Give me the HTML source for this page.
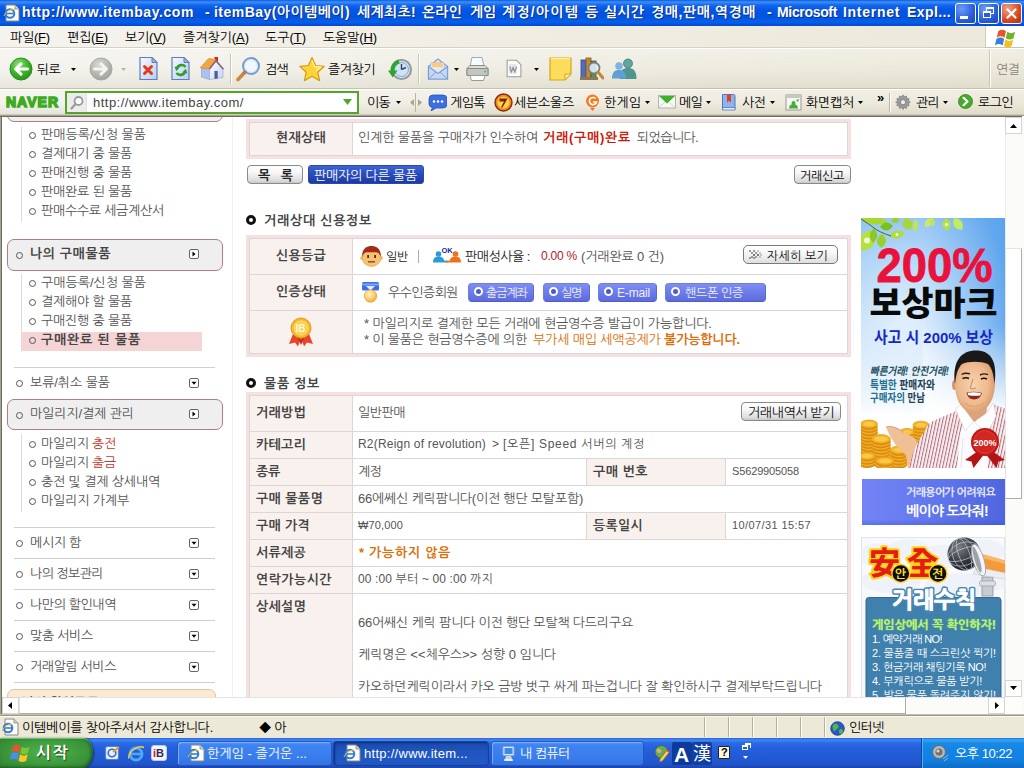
<!DOCTYPE html>
<html lang="ko">
<head>
<meta charset="utf-8">
<title>itemBay</title>
<style>
*{box-sizing:border-box;margin:0;padding:0}
html,body{width:1024px;height:768px;overflow:hidden;background:#ece9d8}
body{font-family:"Liberation Sans","NanumGothic","Noto Sans CJK KR",sans-serif;font-size:13px;color:#000;position:relative}
.a{position:absolute;display:block}
.t{position:absolute;white-space:nowrap;line-height:1}
u{text-decoration:underline;text-underline-offset:1px}
.ring{position:absolute;border-radius:50%;border:1.5px solid #555;width:7px;height:7px}
/* chrome */
.wb{top:3px;width:21px;height:21px;border:1px solid #fff;border-radius:3px;background:radial-gradient(circle at 30% 25%,#6d9bf8,#2a5ddb 60%,#1a44bb)}
.wb.c{background:radial-gradient(circle at 30% 25%,#f0a088,#d8481f 60%,#b02c0c)}
</style>
</head>
<body>
<!-- p_page_side -->
<div class="a" style="left:2px;top:117px;width:1003px;height:581px;background:#fff"></div>
<div class="a" style="left:232px;top:117px;width:1px;height:581px;background:#f1f1f1"></div>
<div class="a" style="border:1px solid #b47c84;border-radius:7px;background:#efefef;left:7px;top:90px;width:216px;height:32px;"></div>
<div class="a" style="left:21px;top:127px;width:1px;height:95px;background:#dcdcdc"></div>
<div class="ring" style="left:29.0px;top:132.0px;border-color:#555"></div>
<div class="t" style="left:41px;top:128px;color:#555;letter-spacing:0.00px;">판매등록/신청 물품</div>
<div class="ring" style="left:29.0px;top:151.0px;border-color:#555"></div>
<div class="t" style="left:41px;top:147px;color:#555;letter-spacing:-0.20px;">결제대기 중 물품</div>
<div class="ring" style="left:29.0px;top:170.0px;border-color:#555"></div>
<div class="t" style="left:41px;top:166px;color:#555;letter-spacing:-0.20px;">판매진행 중 물품</div>
<div class="ring" style="left:29.0px;top:189.0px;border-color:#555"></div>
<div class="t" style="left:41px;top:185px;color:#555;letter-spacing:-0.20px;">판매완료 된 물품</div>
<div class="ring" style="left:29.0px;top:208.0px;border-color:#555"></div>
<div class="t" style="left:41px;top:204px;color:#555;letter-spacing:-0.26px;">판매수수료 세금계산서</div>
<div class="a" style="left:7px;top:239px;width:216px;height:32px;border:1px solid #b47c84;border-radius:7px;background:#efefef"></div>
<div class="ring" style="left:16.0px;top:252.0px;border-color:#555"></div>
<div class="t" style="left:30px;top:247px;color:#444;font-weight:bold;letter-spacing:0.58px;">나의 구매물품</div>
<svg class="a" style="left:189px;top:249px;" width="10" height="10" viewBox="0 0 10 10"><rect x=".5" y=".5" width="9" height="9" rx="1.500" fill="#fff" stroke="#666" stroke-width="1"/><path d="M3.500 2.500v5l3-2.500z" fill="#000"/></svg>
<div class="a" style="left:21px;top:274px;width:1px;height:78px;background:#dcdcdc"></div>
<div class="a" style="left:21px;top:332px;width:181px;height:19px;background:#f4d4d4"></div>
<div class="ring" style="left:29.0px;top:280.0px;border-color:#555"></div>
<div class="t" style="left:41px;top:276px;color:#555;letter-spacing:0.00px;">구매등록/신청 물품</div>
<div class="ring" style="left:29.0px;top:299.0px;border-color:#555"></div>
<div class="t" style="left:41px;top:295px;color:#555;letter-spacing:-0.20px;">결제해야 할 물품</div>
<div class="ring" style="left:29.0px;top:318.0px;border-color:#555"></div>
<div class="t" style="left:41px;top:314px;color:#555;letter-spacing:-0.20px;">구매진행 중 물품</div>
<div class="ring" style="left:29.0px;top:337.0px;border-color:#555"></div>
<div class="t" style="left:41px;top:333px;color:#444;font-weight:bold;letter-spacing:0.80px;">구매완료 된 물품</div>
<div class="a" style="left:14px;top:367px;width:201px;height:1px;background:#cfcfcf"></div>
<div class="ring" style="left:16.0px;top:380.0px;border-color:#555"></div>
<div class="t" style="left:30px;top:376px;color:#555;letter-spacing:-0.07px;">보류/취소 물품</div>
<svg class="a" style="left:189px;top:378px;" width="10" height="10" viewBox="0 0 10 10"><rect x=".5" y=".5" width="9" height="9" rx="1.500" fill="#fff" stroke="#666" stroke-width="1"/><path d="M2.500 3.800h5L5 6.800z" fill="#000"/></svg>
<div class="a" style="left:7px;top:399px;width:216px;height:31px;border:1px solid #b47c84;border-radius:7px;background:#efefef"></div>
<div class="ring" style="left:16.0px;top:411.5px;border-color:#555"></div>
<div class="t" style="left:30px;top:407px;color:#555;letter-spacing:-0.10px;">마일리지/결제 관리</div>
<svg class="a" style="left:189px;top:409px;" width="10" height="10" viewBox="0 0 10 10"><rect x=".5" y=".5" width="9" height="9" rx="1.500" fill="#fff" stroke="#666" stroke-width="1"/><path d="M3.500 2.500v5l3-2.500z" fill="#000"/></svg>
<div class="a" style="left:21px;top:434px;width:1px;height:78px;background:#dcdcdc"></div>
<div class="ring" style="left:29.0px;top:441.0px;border-color:#555"></div>
<div class="t" style="left:41px;top:437px;color:#555;letter-spacing:-0.28px;">마일리지 <span style="color:#c0392b">충전</span></div>
<div class="ring" style="left:29.0px;top:460.0px;border-color:#555"></div>
<div class="t" style="left:41px;top:456px;color:#555;letter-spacing:-0.28px;">마일리지 <span style="color:#c0392b">출금</span></div>
<div class="ring" style="left:29.0px;top:479.0px;border-color:#555"></div>
<div class="t" style="left:41px;top:475px;color:#555;letter-spacing:-0.15px;">충전 및 결제 상세내역</div>
<div class="ring" style="left:29.0px;top:498.0px;border-color:#555"></div>
<div class="t" style="left:41px;top:494px;color:#555;letter-spacing:-0.14px;">마일리지 가계부</div>
<div class="a" style="left:14px;top:527px;width:201px;height:1px;background:#cfcfcf"></div>
<div class="ring" style="left:16.0px;top:540.0px;border-color:#555"></div>
<div class="t" style="left:30px;top:536px;color:#555;letter-spacing:-0.30px;">메시지 함</div>
<svg class="a" style="left:189px;top:538px;" width="10" height="10" viewBox="0 0 10 10"><rect x=".5" y=".5" width="9" height="9" rx="1.500" fill="#fff" stroke="#666" stroke-width="1"/><path d="M2.500 3.800h5L5 6.800z" fill="#000"/></svg>
<div class="a" style="left:14px;top:558px;width:201px;height:1px;background:#cfcfcf"></div>
<div class="ring" style="left:16.0px;top:571.0px;border-color:#555"></div>
<div class="t" style="left:30px;top:567px;color:#555;letter-spacing:-0.56px;">나의 정보관리</div>
<svg class="a" style="left:189px;top:569px;" width="10" height="10" viewBox="0 0 10 10"><rect x=".5" y=".5" width="9" height="9" rx="1.500" fill="#fff" stroke="#666" stroke-width="1"/><path d="M2.500 3.800h5L5 6.800z" fill="#000"/></svg>
<div class="a" style="left:14px;top:589px;width:201px;height:1px;background:#cfcfcf"></div>
<div class="ring" style="left:16.0px;top:602.0px;border-color:#555"></div>
<div class="t" style="left:30px;top:598px;color:#555;letter-spacing:-0.39px;">나만의 할인내역</div>
<svg class="a" style="left:189px;top:600px;" width="10" height="10" viewBox="0 0 10 10"><rect x=".5" y=".5" width="9" height="9" rx="1.500" fill="#fff" stroke="#666" stroke-width="1"/><path d="M2.500 3.800h5L5 6.800z" fill="#000"/></svg>
<div class="a" style="left:14px;top:620px;width:201px;height:1px;background:#cfcfcf"></div>
<div class="ring" style="left:16.0px;top:633.0px;border-color:#555"></div>
<div class="t" style="left:30px;top:629px;color:#555;letter-spacing:-0.29px;">맞춤 서비스</div>
<svg class="a" style="left:189px;top:631px;" width="10" height="10" viewBox="0 0 10 10"><rect x=".5" y=".5" width="9" height="9" rx="1.500" fill="#fff" stroke="#666" stroke-width="1"/><path d="M2.500 3.800h5L5 6.800z" fill="#000"/></svg>
<div class="a" style="left:14px;top:651px;width:201px;height:1px;background:#cfcfcf"></div>
<div class="ring" style="left:16.0px;top:664.0px;border-color:#555"></div>
<div class="t" style="left:30px;top:660px;color:#555;letter-spacing:-0.39px;">거래알림 서비스</div>
<svg class="a" style="left:189px;top:662px;" width="10" height="10" viewBox="0 0 10 10"><rect x=".5" y=".5" width="9" height="9" rx="1.500" fill="#fff" stroke="#666" stroke-width="1"/><path d="M2.500 3.800h5L5 6.800z" fill="#000"/></svg>
<div class="a" style="left:14px;top:682px;width:201px;height:1px;background:#cfcfcf"></div>
<div class="a" style="left:7px;top:689px;width:209px;height:30px;border:1px solid #dcc6a4;border-radius:7px;background:#fbe9d2"></div>
<div class="t" style="left:22px;top:696px;color:#6a5a48;font-weight:bold;">나의 할인쿠폰</div>
<!-- p_page_main -->
<div class="a" style="left:246px;top:119px;width:605px;height:40px;background:#f6e0e2"></div>
<div class="a" style="left:249px;top:122px;width:599px;height:34px;background:#fff;border:1px solid #dcd6d6"></div>
<div class="a" style="left:250px;top:123px;width:102px;height:32px;background:#f9f1ee"></div>
<div class="a" style="left:352px;top:123px;width:1px;height:32px;background:#dcd6d6"></div>
<div class="t" style="left:276px;top:131px;color:#444;font-weight:bold;letter-spacing:0.28px;">현재상태</div>
<div class="t" style="left:358px;top:131px;color:#555;letter-spacing:-0.11px;">인계한 물품을 구매자가 인수하여</div>
<div class="t" style="left:543px;top:131px;color:#cc1a0a;font-weight:bold;letter-spacing:0.75px;">거래(구매)완료</div>
<div class="t" style="left:637px;top:131px;color:#555;letter-spacing:-0.62px;">되었습니다.</div>
<div class="a" style="left:247px;top:165px;width:56px;height:19px;border:1px solid #8a8a8a;border-radius:4px;background:linear-gradient(#ffffff 0,#f6f6f6 40%,#dcdcdc 85%,#c8c8c8 100%)"></div>
<div class="t" style="left:258px;top:169px;color:#222;font-weight:bold;letter-spacing:-0.06px;">목&nbsp;&nbsp;&nbsp;록</div>
<div class="a" style="left:308px;top:165px;width:116px;height:19px;border-radius:3px;background:linear-gradient(#3d64d4 0,#2a4cbc 45%,#1d3aa0 100%);border:1px solid #2a48b0"></div>
<div class="t" style="left:314px;top:169px;color:#fff;letter-spacing:-0.20px;">판매자의 다른 물품</div>
<div class="a" style="left:794px;top:165px;width:57px;height:19px;border:1px solid #8a8a8a;border-radius:4px;background:linear-gradient(#ffffff 0,#f6f6f6 40%,#dcdcdc 85%,#c8c8c8 100%)"></div>
<div class="t" style="left:800px;top:170px;font-size:12px;letter-spacing:-0.28px;">거래신고</div>
<div class="a" style="left:246px;top:215px;width:10px;height:10px;border-radius:50%;border:3px solid #111;background:#fff"></div>
<div class="t" style="left:264px;top:214px;color:#444;font-weight:bold;letter-spacing:0.74px;">거래상대 신용정보</div>
<div class="a" style="left:246px;top:235px;width:605px;height:122px;background:#f6e0e2"></div>
<div class="a" style="left:249px;top:238px;width:599px;height:116px;background:#fff;border:1px solid #dcd6d6"></div>
<div class="a" style="left:250px;top:239px;width:102px;height:114px;background:#f9f1ee"></div>
<div class="a" style="left:352px;top:239px;width:1px;height:114px;background:#dcd6d6"></div>
<div class="a" style="left:250px;top:274px;width:597px;height:1px;background:#dcd6d6"></div>
<div class="a" style="left:250px;top:310px;width:597px;height:1px;background:#dcd6d6"></div>
<div class="t" style="left:276px;top:249px;color:#444;font-weight:bold;letter-spacing:0.28px;">신용등급</div>
<div class="t" style="left:276px;top:285px;color:#444;font-weight:bold;letter-spacing:0.28px;">인증상태</div>
<svg class="a" style="left:360px;top:245px;" width="23" height="22" viewBox="0 0 23 22"><circle cx="2" cy="13" r="1.800" fill="#eeb060"/><circle cx="21" cy="13" r="1.800" fill="#eeb060"/><ellipse cx="11.500" cy="12.500" rx="9.500" ry="9" fill="#f6c170" stroke="#e0a04a" stroke-width=".6"/><path d="M2.300 12C1.500 3.500 7 1 11.500 1S21.500 3.500 20.700 12C19.500 8.500 18 7.200 16 7.200H7C5 7.200 3.500 8.500 2.300 12z" fill="#a42a1a"/><rect x="7.300" y="10" width="1.600" height="3" fill="#3a2416"/><rect x="14.300" y="10" width="1.600" height="3" fill="#3a2416"/><path d="M8 16.800h7" stroke="#8a3a1a" stroke-width="1.300"/></svg>
<div class="t" style="left:386px;top:251px;font-size:12px;color:#222;letter-spacing:-0.28px;">일반</div>
<div class="a" style="left:418px;top:250px;width:1px;height:13px;background:#aaa"></div>
<svg class="a" style="left:433px;top:246px;" width="28" height="17" viewBox="0 0 28 17"><circle cx="5.500" cy="8" r="2.800" fill="#2a9ad8"/><path d="M0 16.500c0-4 2-6 5.500-6s5.500 2 5.500 4l4 .3v1.700z" fill="#2a9ad8"/><circle cx="22.500" cy="8" r="2.800" fill="#f2701a"/><path d="M28 16.500c0-4-2-6-5.500-6s-5.500 2-5.500 4l-4 .3v1.700z" fill="#f2701a"/><text x="8.500" y="6.500" font-size="7.500" font-weight="bold" font-family="Liberation Sans,sans-serif" fill="#1a2a9a">OK</text></svg>
<div class="t" style="left:465px;top:250px;color:#222;letter-spacing:-0.48px;">판매성사율 :</div>
<div class="t" style="left:541px;top:250px;font-size:12px;color:#b0202a;letter-spacing:-0.23px;">0.00 %</div>
<div class="t" style="left:581px;top:250px;color:#555;letter-spacing:-0.12px;">(거래완료 0 건)</div>
<div class="a" style="left:743px;top:245px;width:95px;height:19px;border:1px solid #7a7a7a;border-radius:5px;background:linear-gradient(#ffffff 0,#f4f4f4 50%,#dedede 100%)"></div>
<svg class="a" style="left:749px;top:250px;" width="13" height="9" viewBox="0 0 13 9"><g fill="#9a9a9a"><rect x="0" y="0" width="2" height="2"/><rect x="2" y="2" width="2" height="2"/><rect x="4" y="4" width="2" height="2" fill="#777"/><rect x="2" y="6" width="2" height="2"/><rect x="0" y="7" width="2" height="2"/><rect x="4" y="0" width="2" height="2"/><rect x="6" y="2" width="2" height="2"/><rect x="8" y="4" width="2" height="2" fill="#777"/><rect x="6" y="6" width="2" height="2"/><rect x="4" y="7" width="2" height="2"/><rect x="8" y="0" width="2" height="2" opacity=".5"/><rect x="10" y="2" width="2" height="2" opacity=".5"/><rect x="11" y="4" width="2" height="2" opacity=".5"/><rect x="10" y="6" width="2" height="2" opacity=".5"/></g></svg>
<div class="t" style="left:767px;top:250px;font-size:12px;color:#111;letter-spacing:0.21px;">자세히 보기</div>
<svg class="a" style="left:361px;top:281px;" width="19" height="22" viewBox="0 0 19 22"><defs><radialGradient id="mdl" cx=".4" cy=".35" r=".7"><stop offset="0" stop-color="#fff4cc"/><stop offset=".6" stop-color="#f8cc68"/><stop offset="1" stop-color="#e8a838"/></radialGradient></defs><rect x="1" y="1" width="17" height="8.500" rx="1.500" fill="#3c6ee4"/><path d="M1 2.500h17v2H1z" fill="#7aa4f8"/><path d="M5 5l4.500 4.500L14 5" fill="#fff" opacity=".85"/><circle cx="9.500" cy="15" r="6.300" fill="url(#mdl)" stroke="#e0a030" stroke-width=".6"/></svg>
<div class="t" style="left:388px;top:286px;color:#555;letter-spacing:-0.55px;">우수인증회원</div>
<div class="a" style="left:468px;top:283px;width:66px;height:19px;border-radius:4px;background:linear-gradient(#7f8ef2 0,#6c7ce8 50%,#5d6bdc 100%);border:1px solid #6f7de0;border-bottom-color:#4f5cc4;border-right-color:#5a68d0"></div>
<div class="a" style="left:474px;top:287px;width:9px;height:9px;border-radius:50%;border:2px solid #fff;background:#4a5ad0"></div>
<div class="t" style="left:486px;top:287px;font-size:12px;color:#eef0ff;letter-spacing:-1.03px;">출금계좌</div>
<div class="a" style="left:543px;top:283px;width:47px;height:19px;border-radius:4px;background:linear-gradient(#7f8ef2 0,#6c7ce8 50%,#5d6bdc 100%);border:1px solid #6f7de0;border-bottom-color:#4f5cc4;border-right-color:#5a68d0"></div>
<div class="a" style="left:549px;top:287px;width:9px;height:9px;border-radius:50%;border:2px solid #fff;background:#4a5ad0"></div>
<div class="t" style="left:561px;top:287px;font-size:12px;color:#eef0ff;letter-spacing:-1.28px;">실명</div>
<div class="a" style="left:598px;top:283px;width:59px;height:19px;border-radius:4px;background:linear-gradient(#7f8ef2 0,#6c7ce8 50%,#5d6bdc 100%);border:1px solid #6f7de0;border-bottom-color:#4f5cc4;border-right-color:#5a68d0"></div>
<div class="a" style="left:604px;top:287px;width:9px;height:9px;border-radius:50%;border:2px solid #fff;background:#4a5ad0"></div>
<div class="t" style="left:617px;top:287px;font-size:12px;color:#eef0ff;letter-spacing:-0.17px;">E-mail</div>
<div class="a" style="left:665px;top:283px;width:101px;height:19px;border-radius:4px;background:linear-gradient(#7f8ef2 0,#6c7ce8 50%,#5d6bdc 100%);border:1px solid #6f7de0;border-bottom-color:#4f5cc4;border-right-color:#5a68d0"></div>
<div class="a" style="left:671px;top:287px;width:9px;height:9px;border-radius:50%;border:2px solid #fff;background:#4a5ad0"></div>
<div class="t" style="left:685px;top:287px;font-size:12px;color:#eef0ff;letter-spacing:-0.29px;">핸드폰 인증</div>
<svg class="a" style="left:288px;top:317px;" width="26" height="30" viewBox="0 0 26 30"><path d="M5 17L1 27l6-1.500 3 4 3-9z" fill="#e8442a"/><path d="M21 17l4 10-6-1.500-3 4-3-9z" fill="#e8442a"/><path d="M9 20l4 2 4-2-4 8z" fill="#c8301a"/><circle cx="13" cy="11" r="10" fill="#f7b82a" stroke="#e09a1a" stroke-width="1"/><circle cx="13" cy="11" r="7" fill="#fbd04a" stroke="#f7e08a" stroke-width="1"/><text x="7.500" y="15" font-size="10" font-weight="bold" font-family="Liberation Sans,sans-serif" fill="#fff8d8">IB</text></svg>
<div class="t" style="left:364px;top:317px;color:#555;letter-spacing:-0.11px;">* 마일리지로 결제한 모든 거래에 현금영수증 발급이 가능합니다.</div>
<div class="t" style="left:364px;top:333px;color:#555;letter-spacing:-0.19px;">* 이 물품은 현금영수증에 의한</div>
<div class="t" style="left:533px;top:333px;color:#d9700a;letter-spacing:-0.15px;">부가세 매입 세액공제가 <b>불가능합니다.</b></div>
<div class="a" style="left:246px;top:378px;width:10px;height:10px;border-radius:50%;border:3px solid #111;background:#fff"></div>
<div class="t" style="left:264px;top:377px;color:#444;font-weight:bold;letter-spacing:0.70px;">물품 정보</div>
<div class="a" style="left:246px;top:392px;width:605px;height:330px;background:#f6e0e2"></div>
<div class="a" style="left:249px;top:395px;width:599px;height:324px;background:#fff;border:1px solid #dcd6d6"></div>
<div class="a" style="left:250px;top:396px;width:102px;height:322px;background:#f9f1ee"></div>
<div class="a" style="left:352px;top:396px;width:1px;height:322px;background:#dcd6d6"></div>
<div class="a" style="left:250px;top:431px;width:597px;height:1px;background:#dcd6d6"></div>
<div class="a" style="left:250px;top:458px;width:597px;height:1px;background:#dcd6d6"></div>
<div class="a" style="left:250px;top:485px;width:597px;height:1px;background:#dcd6d6"></div>
<div class="a" style="left:250px;top:512px;width:597px;height:1px;background:#dcd6d6"></div>
<div class="a" style="left:250px;top:539px;width:597px;height:1px;background:#dcd6d6"></div>
<div class="a" style="left:250px;top:566px;width:597px;height:1px;background:#dcd6d6"></div>
<div class="a" style="left:250px;top:593px;width:597px;height:1px;background:#dcd6d6"></div>
<div class="a" style="left:587px;top:459px;width:138px;height:26px;background:#f9f1ee"></div>
<div class="a" style="left:586px;top:459px;width:1px;height:26px;background:#dcd6d6"></div>
<div class="a" style="left:725px;top:459px;width:1px;height:26px;background:#dcd6d6"></div>
<div class="a" style="left:587px;top:513px;width:138px;height:26px;background:#f9f1ee"></div>
<div class="a" style="left:586px;top:513px;width:1px;height:26px;background:#dcd6d6"></div>
<div class="a" style="left:725px;top:513px;width:1px;height:26px;background:#dcd6d6"></div>
<div class="t" style="left:256px;top:406px;color:#444;font-weight:bold;letter-spacing:0.28px;">거래방법</div>
<div class="t" style="left:256px;top:438px;color:#444;font-weight:bold;letter-spacing:0.28px;">카테고리</div>
<div class="t" style="left:256px;top:465px;color:#444;font-weight:bold;letter-spacing:-0.23px;">종류</div>
<div class="t" style="left:256px;top:492px;color:#444;font-weight:bold;letter-spacing:0.38px;">구매 물품명</div>
<div class="t" style="left:256px;top:519px;color:#444;font-weight:bold;letter-spacing:0.30px;">구매 가격</div>
<div class="t" style="left:256px;top:546px;color:#444;font-weight:bold;letter-spacing:0.28px;">서류제공</div>
<div class="t" style="left:256px;top:573px;color:#444;font-weight:bold;letter-spacing:0.45px;">연락가능시간</div>
<div class="t" style="left:256px;top:600px;color:#444;font-weight:bold;letter-spacing:0.28px;">상세설명</div>
<div class="t" style="left:358px;top:406px;color:#555;letter-spacing:-0.47px;">일반판매</div>
<div class="a" style="left:741px;top:402px;width:100px;height:19px;border:1px solid #8a8a8a;border-radius:4px;background:linear-gradient(#ffffff 0,#f6f6f6 40%,#dcdcdc 85%,#c8c8c8 100%)"></div>
<div class="t" style="left:748px;top:406px;color:#111;letter-spacing:-0.39px;">거래내역서 받기</div>
<div class="t" style="left:358px;top:438px;font-size:12px;color:#555;letter-spacing:0.20px;">R2(Reign of revolution)</div>
<div class="t" style="left:492px;top:438px;font-size:12px;color:#555;">&gt;</div>
<div class="t" style="left:503px;top:438px;font-size:12px;color:#555;letter-spacing:0.69px;">[오픈] Speed 서버의 계정</div>
<div class="t" style="left:358px;top:465px;color:#555;letter-spacing:-0.73px;">계정</div>
<div class="t" style="left:593px;top:465px;color:#444;font-weight:bold;letter-spacing:0.50px;">구매 번호</div>
<div class="t" style="left:732px;top:466px;font-size:11px;color:#555;letter-spacing:-0.14px;">S5629905058</div>
<div class="t" style="left:358px;top:492px;color:#555;letter-spacing:-0.19px;">66에쎄신 케릭팜니다(이전 행단 모탈포함)</div>
<div class="t" style="left:358px;top:520px;font-size:11px;color:#555;letter-spacing:0.14px;">₩70,000</div>
<div class="t" style="left:593px;top:519px;color:#444;font-weight:bold;letter-spacing:0.28px;">등록일시</div>
<div class="t" style="left:732px;top:520px;font-size:11px;color:#555;letter-spacing:0.40px;">10/07/31 15:57</div>
<div class="t" style="left:359px;top:546px;color:#d9700a;font-weight:bold;letter-spacing:0.71px;">* 가능하지 않음</div>
<div class="t" style="left:358px;top:573px;font-size:12px;color:#555;letter-spacing:0.13px;">00 :00 부터 ~ 00 :00 까지</div>
<div class="t" style="left:358px;top:616px;color:#555;letter-spacing:-0.20px;">66어쌔신 케릭 팜니다 이전 행단 모탈책 다드리구요</div>
<div class="t" style="left:358px;top:648px;color:#555;letter-spacing:-0.03px;">케릭명은 &lt;&lt;체우스&gt;&gt; 성향 0 임니다</div>
<div class="t" style="left:358px;top:680px;color:#555;letter-spacing:-0.11px;">카오하던케릭이라서 카오 금방 벗구 싸게 파는겁니다 잘 확인하시구 결제부탁드립니다</div>
<!-- p_page_ban -->
<svg class="a" style="left:861px;top:218px;" width="144" height="250" viewBox="0 0 144 250"><defs><linearGradient id="sky" x1="0" y1="0" x2="0" y2="1"><stop offset="0" stop-color="#86bdf2"/><stop offset=".3" stop-color="#a9d3f7"/><stop offset=".55" stop-color="#cfe5fa"/><stop offset=".74" stop-color="#eef6fd"/><stop offset=".79" stop-color="#ffffff"/><stop offset="1" stop-color="#ffffff"/></linearGradient><radialGradient id="glow" cx=".3" cy=".5" r=".75"><stop offset="0" stop-color="#fff" stop-opacity=".55"/><stop offset=".55" stop-color="#fff" stop-opacity=".2"/><stop offset="1" stop-color="#fff" stop-opacity="0"/></radialGradient><linearGradient id="rgt" x1="0" y1="0" x2="1" y2="0"><stop offset="0" stop-color="#4f9cec" stop-opacity="0"/><stop offset="1" stop-color="#4f9cec" stop-opacity=".8"/></linearGradient><linearGradient id="rfade" x1="0" y1="0" x2="0" y2="1"><stop offset="0" stop-color="#fff" stop-opacity="0"/><stop offset=".55" stop-color="#fff" stop-opacity="0"/><stop offset="1" stop-color="#fff" stop-opacity="1"/></linearGradient><radialGradient id="face" cx=".45" cy=".5" r=".62"><stop offset="0" stop-color="#f8d2ac"/><stop offset=".6" stop-color="#eeb98e"/><stop offset="1" stop-color="#cf9062"/></radialGradient><pattern id="strp" width="3.2" height="6" patternUnits="userSpaceOnUse" patternTransform="rotate(12)"><rect width="3.2" height="6" fill="#f6eff1"/><rect width="1" height="6" fill="#b86a78"/></pattern></defs><rect width="144" height="250" fill="url(#sky)"/><g><rect x="62" width="82" height="196" fill="url(#rgt)"/><rect x="62" width="82" height="196" fill="url(#rfade)"/></g><rect width="144" height="200" fill="url(#glow)"/><path d="M0.0 1.0Q12.6 10.4 27.0 4.0Q14.4 -5.4 0.0 1.0z" fill="#a8d830"/><path d="M19.0 9.0Q26.1 16.4 32.0 8.0Q24.9 0.6 19.0 9.0z" fill="#7cc01c"/><path d="M11.0 12.0Q-8.6 15.6 1.0 33.0Q20.6 29.4 11.0 12.0z" fill="#b4e040"/><circle cx="6.0" cy="22.5" r="3.0" fill="#fff" opacity=".8"/><path d="M13.0 10.0Q5.1 17.0 12.0 25.0Q19.9 18.0 13.0 10.0z" fill="#8cc824"/><path d="M21.0 16.0Q11.6 22.4 20.0 30.0Q29.4 23.6 21.0 16.0z" fill="#98d02a"/><path d="M28.0 18.0Q37.5 24.3 44.0 15.0Q34.5 8.7 28.0 18.0z" fill="#b0dc3c"/><circle cx="36.0" cy="16.5" r="1.5" fill="#fff" opacity=".8"/><path d="M30.0 3.0Q35.1 7.9 39.0 2.0Q33.9 -2.9 30.0 3.0z" fill="#9cd02c"/><path d="M44.0 0.0Q37.3 9.8 49.0 12.0Q55.7 2.2 44.0 0.0z" fill="#a4d834"/><path d="M55.0 1.0Q49.1 7.1 54.0 14.0Q59.9 7.9 55.0 1.0z" fill="#c0e458"/><path d="M72.0 0.0Q62.4 -0.4 64.0 9.0Q73.6 9.4 72.0 0.0z" fill="#c8ea68"/><path d="M70.0 0.0Q66.9 5.7 73.0 8.0Q76.1 2.3 70.0 0.0z" fill="#c0e458"/><path d="M85.0 0.0Q77.1 7.1 86.0 13.0Q93.9 5.9 85.0 0.0z" fill="#b4e048"/><circle cx="85.5" cy="6.5" r="1.6" fill="#fff" opacity=".8"/><path d="M93.0 0.0Q89.6 11.0 101.0 12.0Q104.4 1.0 93.0 0.0z" fill="#c4ea64"/><path d="M0 1Q8 6 13 10T30 18" fill="none" stroke="#355c18" stroke-width=".9"/><text x="15.500" y="64" font-family="Liberation Sans,sans-serif" font-weight="bold" font-size="49" fill="#e8123c" stroke="#e8123c" stroke-width=".8" textLength="116" lengthAdjust="spacingAndGlyphs">200%</text><text x="8.500" y="97" font-family="Noto Sans CJK KR,NanumGothic,sans-serif" font-weight="900" font-size="33" fill="#0a0a0a" textLength="128" lengthAdjust="spacingAndGlyphs">보상마크</text><text x="13" y="125" font-family="Liberation Sans,Noto Sans CJK KR,sans-serif" font-weight="bold" font-size="15.500" fill="#1428c4" textLength="119" lengthAdjust="spacingAndGlyphs">사고 시 200% 보상</text><g font-family="Liberation Sans,Noto Sans CJK KR,sans-serif" font-weight="bold" font-size="11"><text x="9" y="157" fill="#24505e" textLength="79" lengthAdjust="spacingAndGlyphs" font-style="italic">빠른거래! 안전거래!</text><text x="9" y="170.500" fill="#1f6f8f" textLength="65" lengthAdjust="spacingAndGlyphs">특별한 <tspan fill="#24404e">판매자와</tspan></text><text x="9" y="183.500" fill="#1f6f8f" textLength="55" lengthAdjust="spacingAndGlyphs">구매자의 <tspan fill="#24404e">만남</tspan></text></g><ellipse cx="60" cy="221.6" rx="8" ry="3.8" fill="#d98a12"/><ellipse cx="60" cy="219.8" rx="8" ry="3.8" fill="#f7b52a" stroke="#e39a18" stroke-width=".7"/><ellipse cx="60" cy="218.4" rx="8" ry="3.8" fill="#d98a12"/><ellipse cx="60" cy="216.6" rx="8" ry="3.8" fill="#f7b52a" stroke="#e39a18" stroke-width=".7"/><ellipse cx="60" cy="215.2" rx="8" ry="3.8" fill="#d98a12"/><ellipse cx="60" cy="213.4" rx="8" ry="3.8" fill="#f7b52a" stroke="#e39a18" stroke-width=".7"/><ellipse cx="60" cy="212.0" rx="8" ry="3.8" fill="#d98a12"/><ellipse cx="60" cy="210.2" rx="8" ry="3.8" fill="#f7b52a" stroke="#e39a18" stroke-width=".7"/><ellipse cx="60" cy="208.8" rx="8" ry="3.8" fill="#d98a12"/><ellipse cx="60" cy="207.0" rx="8" ry="3.8" fill="#f7b52a" stroke="#e39a18" stroke-width=".7"/><ellipse cx="60" cy="207" rx="5.8" ry="2.5" fill="#fbc94a" stroke="#f0a820" stroke-width=".6"/><ellipse cx="46" cy="222.2" rx="7.5" ry="3.6" fill="#d98a12"/><ellipse cx="46" cy="220.4" rx="7.5" ry="3.6" fill="#f7b52a" stroke="#e39a18" stroke-width=".7"/><ellipse cx="46" cy="219.0" rx="7.5" ry="3.6" fill="#d98a12"/><ellipse cx="46" cy="217.2" rx="7.5" ry="3.6" fill="#f7b52a" stroke="#e39a18" stroke-width=".7"/><ellipse cx="46" cy="215.8" rx="7.5" ry="3.6" fill="#d98a12"/><ellipse cx="46" cy="214.0" rx="7.5" ry="3.6" fill="#f7b52a" stroke="#e39a18" stroke-width=".7"/><ellipse cx="46" cy="214" rx="5.3" ry="2.3" fill="#fbc94a" stroke="#f0a820" stroke-width=".6"/><ellipse cx="8" cy="243.0" rx="8.5" ry="4" fill="#d98a12"/><ellipse cx="8" cy="241.2" rx="8.5" ry="4" fill="#f7b52a" stroke="#e39a18" stroke-width=".7"/><ellipse cx="8" cy="239.8" rx="8.5" ry="4" fill="#d98a12"/><ellipse cx="8" cy="238.0" rx="8.5" ry="4" fill="#f7b52a" stroke="#e39a18" stroke-width=".7"/><ellipse cx="8" cy="236.6" rx="8.5" ry="4" fill="#d98a12"/><ellipse cx="8" cy="234.8" rx="8.5" ry="4" fill="#f7b52a" stroke="#e39a18" stroke-width=".7"/><ellipse cx="8" cy="233.4" rx="8.5" ry="4" fill="#d98a12"/><ellipse cx="8" cy="231.6" rx="8.5" ry="4" fill="#f7b52a" stroke="#e39a18" stroke-width=".7"/><ellipse cx="8" cy="230.2" rx="8.5" ry="4" fill="#d98a12"/><ellipse cx="8" cy="228.4" rx="8.5" ry="4" fill="#f7b52a" stroke="#e39a18" stroke-width=".7"/><ellipse cx="8" cy="227.0" rx="8.5" ry="4" fill="#d98a12"/><ellipse cx="8" cy="225.2" rx="8.5" ry="4" fill="#f7b52a" stroke="#e39a18" stroke-width=".7"/><ellipse cx="8" cy="223.8" rx="8.5" ry="4" fill="#d98a12"/><ellipse cx="8" cy="222.0" rx="8.5" ry="4" fill="#f7b52a" stroke="#e39a18" stroke-width=".7"/><ellipse cx="8" cy="220.6" rx="8.5" ry="4" fill="#d98a12"/><ellipse cx="8" cy="218.8" rx="8.5" ry="4" fill="#f7b52a" stroke="#e39a18" stroke-width=".7"/><ellipse cx="8" cy="217.4" rx="8.5" ry="4" fill="#d98a12"/><ellipse cx="8" cy="215.6" rx="8.5" ry="4" fill="#f7b52a" stroke="#e39a18" stroke-width=".7"/><ellipse cx="8" cy="214.2" rx="8.5" ry="4" fill="#d98a12"/><ellipse cx="8" cy="212.4" rx="8.5" ry="4" fill="#f7b52a" stroke="#e39a18" stroke-width=".7"/><ellipse cx="8" cy="211.0" rx="8.5" ry="4" fill="#d98a12"/><ellipse cx="8" cy="209.2" rx="8.5" ry="4" fill="#f7b52a" stroke="#e39a18" stroke-width=".7"/><ellipse cx="8" cy="207.8" rx="8.5" ry="4" fill="#d98a12"/><ellipse cx="8" cy="206.0" rx="8.5" ry="4" fill="#f7b52a" stroke="#e39a18" stroke-width=".7"/><ellipse cx="8" cy="206" rx="6.3" ry="2.7" fill="#fbc94a" stroke="#f0a820" stroke-width=".6"/><ellipse cx="20" cy="245.2" rx="9.5" ry="4.4" fill="#d98a12"/><ellipse cx="20" cy="243.4" rx="9.5" ry="4.4" fill="#f7b52a" stroke="#e39a18" stroke-width=".7"/><ellipse cx="20" cy="242.0" rx="9.5" ry="4.4" fill="#d98a12"/><ellipse cx="20" cy="240.2" rx="9.5" ry="4.4" fill="#f7b52a" stroke="#e39a18" stroke-width=".7"/><ellipse cx="20" cy="238.8" rx="9.5" ry="4.4" fill="#d98a12"/><ellipse cx="20" cy="237.0" rx="9.5" ry="4.4" fill="#f7b52a" stroke="#e39a18" stroke-width=".7"/><ellipse cx="20" cy="235.6" rx="9.5" ry="4.4" fill="#d98a12"/><ellipse cx="20" cy="233.8" rx="9.5" ry="4.4" fill="#f7b52a" stroke="#e39a18" stroke-width=".7"/><ellipse cx="20" cy="232.4" rx="9.5" ry="4.4" fill="#d98a12"/><ellipse cx="20" cy="230.6" rx="9.5" ry="4.4" fill="#f7b52a" stroke="#e39a18" stroke-width=".7"/><ellipse cx="20" cy="229.2" rx="9.5" ry="4.4" fill="#d98a12"/><ellipse cx="20" cy="227.4" rx="9.5" ry="4.4" fill="#f7b52a" stroke="#e39a18" stroke-width=".7"/><ellipse cx="20" cy="226.0" rx="9.5" ry="4.4" fill="#d98a12"/><ellipse cx="20" cy="224.2" rx="9.5" ry="4.4" fill="#f7b52a" stroke="#e39a18" stroke-width=".7"/><ellipse cx="20" cy="222.8" rx="9.5" ry="4.4" fill="#d98a12"/><ellipse cx="20" cy="221.0" rx="9.5" ry="4.4" fill="#f7b52a" stroke="#e39a18" stroke-width=".7"/><ellipse cx="20" cy="221" rx="7.3" ry="3.1000000000000005" fill="#fbc94a" stroke="#f0a820" stroke-width=".6"/><ellipse cx="38" cy="246.6" rx="8.5" ry="4" fill="#d98a12"/><ellipse cx="38" cy="244.8" rx="8.5" ry="4" fill="#f7b52a" stroke="#e39a18" stroke-width=".7"/><ellipse cx="38" cy="243.4" rx="8.5" ry="4" fill="#d98a12"/><ellipse cx="38" cy="241.6" rx="8.5" ry="4" fill="#f7b52a" stroke="#e39a18" stroke-width=".7"/><ellipse cx="38" cy="240.2" rx="8.5" ry="4" fill="#d98a12"/><ellipse cx="38" cy="238.4" rx="8.5" ry="4" fill="#f7b52a" stroke="#e39a18" stroke-width=".7"/><ellipse cx="38" cy="237.0" rx="8.5" ry="4" fill="#d98a12"/><ellipse cx="38" cy="235.2" rx="8.5" ry="4" fill="#f7b52a" stroke="#e39a18" stroke-width=".7"/><ellipse cx="38" cy="233.8" rx="8.5" ry="4" fill="#d98a12"/><ellipse cx="38" cy="232.0" rx="8.5" ry="4" fill="#f7b52a" stroke="#e39a18" stroke-width=".7"/><ellipse cx="38" cy="232" rx="6.3" ry="2.7" fill="#fbc94a" stroke="#f0a820" stroke-width=".6"/><ellipse cx="6" cy="246.2" rx="8" ry="3.8" fill="#d98a12"/><ellipse cx="6" cy="244.4" rx="8" ry="3.8" fill="#f7b52a" stroke="#e39a18" stroke-width=".7"/><ellipse cx="6" cy="243.0" rx="8" ry="3.8" fill="#d98a12"/><ellipse cx="6" cy="241.2" rx="8" ry="3.8" fill="#f7b52a" stroke="#e39a18" stroke-width=".7"/><ellipse cx="6" cy="239.8" rx="8" ry="3.8" fill="#d98a12"/><ellipse cx="6" cy="238.0" rx="8" ry="3.8" fill="#f7b52a" stroke="#e39a18" stroke-width=".7"/><ellipse cx="6" cy="238" rx="5.8" ry="2.5" fill="#fbc94a" stroke="#f0a820" stroke-width=".6"/><ellipse cx="24" cy="248.0" rx="9" ry="4" fill="#d98a12"/><ellipse cx="24" cy="246.2" rx="9" ry="4" fill="#f7b52a" stroke="#e39a18" stroke-width=".7"/><ellipse cx="24" cy="244.8" rx="9" ry="4" fill="#d98a12"/><ellipse cx="24" cy="243.0" rx="9" ry="4" fill="#f7b52a" stroke="#e39a18" stroke-width=".7"/><ellipse cx="24" cy="243" rx="6.8" ry="2.7" fill="#fbc94a" stroke="#f0a820" stroke-width=".6"/><path d="M58 250L60 230Q62 208 72 203L95 193L100 189L112 203L124 196L132 186L144 190.500V250z" fill="url(#strp)"/><path d="M96 250L99 216L104 201L112 205L124 199L129 216L126 250z" fill="#fcfcfe"/><path d="M100 250L102 220" stroke="#e6e2e8" stroke-width="1"/><path d="M99 186L112 204L125 196L127 184z" fill="#d9a47a"/><path d="M94.500 191L100 186.500L112.500 203.500L104 213z" fill="#fff" stroke="#ddd6dc" stroke-width=".7"/><path d="M132.500 185L125 195.500L113.500 204L126 216L135 198z" fill="#fff" stroke="#ddd6dc" stroke-width=".7"/><ellipse cx="93.500" cy="167" rx="2.500" ry="5" fill="#d89a6c"/><path d="M94 164C92 146 100 139 114 139S136 146 134 164C134 180 128 194 114 194S94 182 94 164z" fill="url(#face)"/><path d="M94 166C91 142 101 132.500 115 132.500S137 142 133.500 166C132.500 156 131 150 127 146C120 143 107 143 101 146C97 150 95 156 94 166z" fill="#1a1818"/><path d="M100.500 156.500q4-2.200 8.500-.6M119 157q4-2 8-.4" fill="none" stroke="#2a1c16" stroke-width="1.400"/><path d="M101.500 160.500q3.500-1.300 6.500 0M120 161q3-1.300 6 0" fill="none" stroke="#1a1210" stroke-width="1.500"/><path d="M112 161q-1.500 6-3 9 3 2 6 0" fill="none" stroke="#c88a60" stroke-width="1"/><path d="M105.500 174.500Q113.500 173 121 175Q119 181.500 113 181.500T105.500 174.500z" fill="#8a2a22"/><path d="M106.500 174.800Q113.500 173.600 120 175.200L119.300 177.500Q113.500 178.300 107.300 177.200z" fill="#fff"/><path d="M104 185q9 7 19 0" fill="none" stroke="#d49a70" stroke-width="1" opacity=".8"/><path d="M25 209C30 207 38 210 44 215L52 219C56 222 57 226 58 231L62 250H47L45 237C37 231 29 220 25 209z" fill="#efbf96"/><path d="M25 209C30 207.500 37 210 43 214.500" fill="none" stroke="#d49a70" stroke-width=".8"/><path d="M51 238C55 226 62 214 71 204L84 208L76 250H48z" fill="url(#strp)"/><path d="M117 233l-13 9 6.500 1.500 2 6.500 10-13zM131 233l13 9-6.500 1.500-2 6.500-10-13z" fill="#b41414"/><circle cx="124" cy="224" r="14" fill="#c01818"/><circle cx="124" cy="224" r="11.500" fill="#d22620" stroke="#e45444" stroke-width=".6"/><text x="112.500" y="227.500" font-family="Liberation Sans,sans-serif" font-weight="bold" font-size="9.500" fill="#fff" textLength="23" lengthAdjust="spacingAndGlyphs">200%</text></svg>
<div class="a" style="left:862px;top:479px;width:143px;height:46px;background:linear-gradient(90deg,#7384f6 0,#6478ee 45%,#4f66de 100%)"></div>
<div class="a" style="left:862px;top:519px;width:143px;height:6px;background:linear-gradient(rgba(50,70,200,0),rgba(50,70,200,.3))"></div>
<div class="t" style="left:906px;top:487px;font-size:11px;color:#e8ecff;font-weight:bold;letter-spacing:-0.71px;font-family:"Liberation Sans","Noto Sans CJK KR",sans-serif;">거래용어가 어려워요</div>
<div class="t" style="left:906px;top:504px;font-size:14px;color:#fff;font-weight:bold;letter-spacing:-0.69px;font-family:"Liberation Sans","Noto Sans CJK KR",sans-serif;text-shadow:0 0 1px #fff;">베이야 도와줘!</div>
<svg class="a" style="left:861px;top:537px;" width="144" height="170" viewBox="0 0 144 170"><defs><radialGradient id="mh" cx=".35" cy=".3" r=".8"><stop offset="0" stop-color="#7a7f88"/><stop offset=".6" stop-color="#30343a"/><stop offset="1" stop-color="#181a1e"/></radialGradient><linearGradient id="mb" x1="0" y1="0" x2="0" y2="1"><stop offset="0" stop-color="#f8a848"/><stop offset=".5" stop-color="#f08a2a"/><stop offset="1" stop-color="#e8e8ec"/></linearGradient></defs><rect x=".5" y=".5" width="143" height="170" fill="#f7f9fc" stroke="#e2e4e8"/><ellipse cx="20" cy="18" rx="22" ry="12" fill="#eaeff6" opacity=".6"/><ellipse cx="48" cy="12" rx="20" ry="10" fill="#eaeff6" opacity=".6"/><ellipse cx="80" cy="20" rx="26" ry="12" fill="#eaeff6" opacity=".6"/><ellipse cx="120" cy="14" rx="24" ry="12" fill="#eaeff6" opacity=".6"/><ellipse cx="30" cy="44" rx="30" ry="12" fill="#eaeff6" opacity=".6"/><ellipse cx="100" cy="48" rx="36" ry="12" fill="#eaeff6" opacity=".6"/><ellipse cx="130" cy="40" rx="20" ry="14" fill="#eaeff6" opacity=".6"/><rect x="121" y="40" width="11" height="19" fill="#c8ccd2" stroke="#8e929a" stroke-width=".8"/><rect x="118.500" y="44" width="16" height="5" rx="2" fill="#dcdee2" stroke="#8e929a" stroke-width=".6"/><path d="M119 16.500L144 23.500V36L115 30z" fill="#f49a3a"/><path d="M119 16.500L144 23.500V27L118 20z" fill="#f8b868"/><path d="M115 30L144 36V42L112.500 37z" fill="#eceef2" stroke="#c0c4cc" stroke-width=".5"/><circle cx="103" cy="17" r="16.500" fill="url(#mh)"/><g fill="none" stroke="#c4c8d0" stroke-width=".8" opacity=".85"><g transform="rotate(-20 103 17)"><ellipse cx="103" cy="17" rx="16.500" ry="5.500"/><ellipse cx="103" cy="17" rx="5.500" ry="16.500"/><ellipse cx="103" cy="17" rx="11.500" ry="16.500"/><ellipse cx="103" cy="17" rx="16.500" ry="11.500"/></g></g><ellipse cx="117.500" cy="23" rx="5.500" ry="16.500" fill="#f2f4f8" stroke="#9ea2aa" stroke-width=".8" transform="rotate(-17 117.500 23)"/><ellipse cx="116" cy="22.500" rx="2.500" ry="13.500" fill="#5a5e66" opacity=".55" transform="rotate(-17 116 22.500)"/><text x="8" y="37" font-family="Noto Sans CJK KR,Noto Sans CJK SC,sans-serif" font-weight="700" font-size="31" fill="#e41c14" stroke="#ffd21a" stroke-width="4.400" stroke-linejoin="round" paint-order="stroke">安</text><text x="46" y="37" font-family="Noto Sans CJK KR,Noto Sans CJK SC,sans-serif" font-weight="700" font-size="31" fill="#e41c14" stroke="#ffd21a" stroke-width="4.400" stroke-linejoin="round" paint-order="stroke">全</text><text x="8" y="37" font-family="Noto Sans CJK KR,Noto Sans CJK SC,sans-serif" font-weight="700" font-size="31" fill="#e41c14">安</text><text x="46" y="37" font-family="Noto Sans CJK KR,Noto Sans CJK SC,sans-serif" font-weight="700" font-size="31" fill="#e41c14">全</text><circle cx="39.8" cy="36.500" r="9" fill="#0c0c0c" stroke="#ffd21a" stroke-width="1.400"/><text x="33.8" y="41" font-family="NanumGothic,Noto Sans CJK KR,sans-serif" font-weight="bold" font-size="12" fill="#ffe02a">안</text><circle cx="77" cy="36.500" r="9" fill="#0c0c0c" stroke="#ffd21a" stroke-width="1.400"/><text x="71" y="41" font-family="NanumGothic,Noto Sans CJK KR,sans-serif" font-weight="bold" font-size="12" fill="#ffe02a">전</text><rect x="5" y="60.500" width="135" height="170" rx="3" fill="#3f80ad" stroke="#2f6890" stroke-width="1"/><text x="31" y="71" font-family="NanumGothic,Noto Sans CJK KR,sans-serif" font-weight="bold" font-size="23" fill="#fff" stroke="#4a86b4" stroke-width="4" stroke-linejoin="round" paint-order="stroke" textLength="84" lengthAdjust="spacingAndGlyphs">거래수칙</text><text x="31" y="71" font-family="NanumGothic,Noto Sans CJK KR,sans-serif" font-weight="bold" font-size="23" fill="#fff" stroke="#fff" stroke-width=".8" textLength="84" lengthAdjust="spacingAndGlyphs">거래수칙</text></svg>
<div class="t" style="left:872px;top:619px;font-size:12px;color:#b4f46c;font-weight:bold;letter-spacing:0.04px;text-shadow:0 0 1px #b4f46c;">게임상에서 꼭 확인하자!</div>
<div class="t" style="left:872px;top:634px;font-size:11px;color:#fff;letter-spacing:-0.56px;">1. 예약거래 NO!</div>
<div class="t" style="left:872px;top:648px;font-size:11px;color:#fff;letter-spacing:-0.23px;">2. 물품줄 때 스크린샷 찍기!</div>
<div class="t" style="left:872px;top:662px;font-size:11px;color:#fff;letter-spacing:-0.41px;">3. 현금거래 채팅기록 NO!</div>
<div class="t" style="left:872px;top:676px;font-size:11px;color:#fff;letter-spacing:-0.30px;">4. 부캐릭으로 물품 받기!</div>
<div class="t" style="left:872px;top:690px;font-size:11px;color:#fff;letter-spacing:-0.23px;">5. 받은 물품 돌려주지 않기!</div>
<!-- p_chrome_top -->
<div class="a" style="left:0px;top:116px;width:1px;height:600px;background:#a5a292"></div>
<div class="a" style="left:1px;top:116px;width:1px;height:600px;background:#6f6c60"></div>
<div class="a" style="left:0px;top:0px;width:1024px;height:26px;background:linear-gradient(#0a5cdc 0,#3f8ff8 2px,#1468ee 5px,#0458e4 9px,#0253df 17px,#0660ec 22px,#0348cc 26px)"></div>
<svg class="a" style="left:3px;top:4px;" width="18" height="18" viewBox="0 0 18 18"><path d="M3 1h9l4 4v12H3z" fill="#fdfcf6" stroke="#8a8a80" stroke-width="1"/><path d="M12 1v4h4" fill="#d8d6c8" stroke="#8a8a80" stroke-width=".8"/><circle cx="7" cy="9.5" r="4.3" fill="none" stroke="#2f7de0" stroke-width="2"/><path d="M1.5 9.5h9" stroke="#2f7de0" stroke-width="1.6"/><path d="M1 12c2-5 8-8 11-6" fill="none" stroke="#f0c020" stroke-width="1"/></svg>
<div class="t" style="left:22px;top:5px;font-size:14px;color:#fff;font-weight:bold;letter-spacing:0.57px;text-shadow:1px 1px 0 #0a2f8c;">http://www.itembay.com</div>
<div class="t" style="left:205px;top:5px;font-size:14px;color:#fff;font-weight:bold;text-shadow:1px 1px 0 #0a2f8c;">-</div>
<div class="t" style="left:214px;top:5px;font-size:14px;color:#fff;font-weight:bold;letter-spacing:0.46px;text-shadow:1px 1px 0 #0a2f8c;">itemBay(아이템베이)</div>
<div class="t" style="left:357px;top:5px;font-size:14px;color:#fff;font-weight:bold;letter-spacing:0.34px;text-shadow:1px 1px 0 #0a2f8c;">세계최초!</div>
<div class="t" style="left:422px;top:5px;font-size:14px;color:#fff;font-weight:bold;letter-spacing:0.17px;text-shadow:1px 1px 0 #0a2f8c;">온라인</div>
<div class="t" style="left:470px;top:5px;font-size:14px;color:#fff;font-weight:bold;letter-spacing:-0.16px;text-shadow:1px 1px 0 #0a2f8c;">게임</div>
<div class="t" style="left:502px;top:5px;font-size:14px;color:#fff;font-weight:bold;letter-spacing:1.22px;text-shadow:1px 1px 0 #0a2f8c;">계정/아이템</div>
<div class="t" style="left:585px;top:5px;font-size:14px;color:#fff;font-weight:bold;text-shadow:1px 1px 0 #0a2f8c;">등</div>
<div class="t" style="left:604px;top:5px;font-size:14px;color:#fff;font-weight:bold;letter-spacing:0.17px;text-shadow:1px 1px 0 #0a2f8c;">실시간</div>
<div class="t" style="left:651px;top:5px;font-size:14px;color:#fff;font-weight:bold;letter-spacing:0.57px;text-shadow:1px 1px 0 #0a2f8c;">경매,판매,역경매</div>
<div class="t" style="left:767px;top:5px;font-size:14px;color:#fff;font-weight:bold;text-shadow:1px 1px 0 #0a2f8c;">-</div>
<div class="t" style="left:777px;top:5px;font-size:14px;color:#fff;font-weight:bold;letter-spacing:-0.33px;text-shadow:1px 1px 0 #0a2f8c;">Microsoft</div>
<div class="t" style="left:843px;top:5px;font-size:14px;color:#fff;font-weight:bold;letter-spacing:0.71px;text-shadow:1px 1px 0 #0a2f8c;">Internet</div>
<div class="t" style="left:907px;top:5px;font-size:14px;color:#fff;font-weight:bold;letter-spacing:0.40px;text-shadow:1px 1px 0 #0a2f8c;">Expl...</div>
<div class="a wb" style="left:955px"><div class="a" style="left:4px;top:12px;width:8px;height:3px;background:#fff"></div></div>
<div class="a wb" style="left:978px"><div class="a" style="left:7px;top:3px;width:8px;height:7px;border:1px solid #fff;border-top-width:2px"></div><div class="a" style="left:4px;top:7px;width:8px;height:7px;border:1px solid #fff;border-top-width:2px;background:#2a5ddb"></div></div>
<div class="a wb c" style="left:1001px"><svg class="a" style="left:4px;top:4px" width="11" height="11"><path d="M1.5 1.5l8 8M9.5 1.5l-8 8" stroke="#fff" stroke-width="2.2" stroke-linecap="round"/></svg></div>
<div class="a" style="left:0px;top:26px;width:1024px;height:22px;background:linear-gradient(90deg,#f4f3ee 0,#f0eee4 45%,#ece9da 100%)"></div>
<div class="a" style="left:0px;top:47px;width:1024px;height:1px;background:#d6d2c2"></div>
<div class="t" style="left:10px;top:31px;letter-spacing:-0.22px;">파일(<u>F</u>)</div>
<div class="t" style="left:67px;top:31px;letter-spacing:-0.16px;">편집(<u>E</u>)</div>
<div class="t" style="left:125px;top:31px;letter-spacing:-0.16px;">보기(<u>V</u>)</div>
<div class="t" style="left:183px;top:31px;letter-spacing:-0.03px;">즐겨찾기(<u>A</u>)</div>
<div class="t" style="left:265px;top:31px;letter-spacing:-0.02px;">도구(<u>T</u>)</div>
<div class="t" style="left:323px;top:31px;letter-spacing:-0.12px;">도움말(<u>H</u>)</div>
<div class="a" style="left:985px;top:26px;width:39px;height:22px;background:#fff;border-left:1px solid #d0ccb8;border-bottom:1px solid #c8c4b0"></div>
<svg class="a" style="left:994px;top:26px;" width="24" height="22" viewBox="0 0 18 17"><path d="M3 4c2-1.5 4-1.5 6 0l-1.2 5c-2-1.5-4-1.5-6 0z" fill="#e8552a"/><path d="M10 4.4c2 1.5 4 1.5 6 0l-1.2 5c-2 1.5-4 1.5-6 0z" fill="#6cb42c"/><path d="M1.6 10c2-1.5 4-1.5 6 0l-1.2 5c-2-1.5-4-1.5-6 0z" fill="#3a7ce0"/><path d="M8.6 10.4c2 1.5 4 1.5 6 0l-1.2 5c-2 1.5-4 1.5-6 0z" fill="#f4c020"/></svg>
<div class="a" style="left:0px;top:48px;width:1024px;height:41px;background:linear-gradient(rgba(255,255,255,.25) 0,rgba(255,255,255,0) 50%,rgba(120,110,70,.10) 100%),linear-gradient(90deg,#f4f3ee 0,#f0eee4 45%,#ece9da 100%)"></div>
<div class="a" style="left:0px;top:48px;width:1024px;height:1px;background:#fff"></div>
<div class="a" style="left:0px;top:88px;width:1024px;height:1px;background:#c5c1ad"></div>
<svg class="a" style="left:9px;top:57px;" width="24" height="24" viewBox="0 0 24 24"><defs><radialGradient id="gb" cx=".4" cy=".3" r=".8"><stop offset="0" stop-color="#8fe07a"/><stop offset=".5" stop-color="#3fb62c"/><stop offset="1" stop-color="#1f8a12"/></radialGradient></defs><circle cx="12" cy="12" r="11" fill="url(#gb)" stroke="#2d8f1e" stroke-width="1"/><path d="M18.5 12H7.5M12 6.8L6.6 12l5.4 5.2" fill="none" stroke="#fff" stroke-width="3" stroke-linecap="round" stroke-linejoin="round"/></svg>
<div class="t" style="left:37px;top:63px;letter-spacing:-0.73px;">뒤로</div>
<svg class="a" style="left:71px;top:68px;" width="5" height="3" viewBox="0 0 5 3"><path d="M0 0h5L2.5 3z" fill="#000"/></svg>
<svg class="a" style="left:89px;top:57px;" width="24" height="24" viewBox="0 0 24 24"><defs><radialGradient id="gf" cx=".4" cy=".3" r=".8"><stop offset="0" stop-color="#d8d8d4"/><stop offset=".6" stop-color="#b4b4ae"/><stop offset="1" stop-color="#9c9c96"/></radialGradient></defs><circle cx="12" cy="12" r="11" fill="url(#gf)" stroke="#a8a8a2" stroke-width="1"/><path d="M5.5 12h11M12 6.8l5.4 5.2-5.4 5.2" fill="none" stroke="#f4f4f0" stroke-width="3" stroke-linecap="round" stroke-linejoin="round"/></svg>
<svg class="a" style="left:121px;top:68px;" width="5" height="3" viewBox="0 0 5 3"><path d="M0 0h5L2.5 3z" fill="#b8b5a5"/></svg>
<svg class="a" style="left:138px;top:56px;" width="22" height="25" viewBox="0 0 22 25"><defs><linearGradient id="pgA" x1="0" y1="0" x2="1" y2="1"><stop offset="0" stop-color="#f6f9ff"/><stop offset="1" stop-color="#bccdf2"/></linearGradient></defs><path d="M2 1.5h12l5 5v17H2z" fill="url(#pgA)" stroke="#5f7cc0" stroke-width="1.2"/><path d="M14 1.5v5h5z" fill="#9fb4e4" stroke="#5f7cc0" stroke-width="1"/><path d="M6.5 10.5l7 7M13.5 10.5l-7 7" stroke="#e03a1a" stroke-width="3" stroke-linecap="round"/></svg>
<svg class="a" style="left:170px;top:56px;" width="22" height="25" viewBox="0 0 22 25"><path d="M2 1.5h12l5 5v17H2z" fill="url(#pgA)" stroke="#5f7cc0" stroke-width="1.2"/><path d="M14 1.5v5h5z" fill="#9fb4e4" stroke="#5f7cc0" stroke-width="1"/><path d="M15.5 11a5 5 0 0 0-8.6 1.2" fill="none" stroke="#2aa02a" stroke-width="2.6"/><path d="M4.5 10.5l5 1.2-3.3 3.6z" fill="#2aa02a"/><path d="M6.5 17a5 5 0 0 0 8.6-1.2" fill="none" stroke="#2aa02a" stroke-width="2.6"/><path d="M17.5 17.5l-5-1.2 3.3-3.6z" fill="#2aa02a"/></svg>
<svg class="a" style="left:199px;top:56px;" width="26" height="25" viewBox="0 0 26 25"><defs><linearGradient id="hw" x1="0" y1="0" x2="1" y2="1"><stop offset="0" stop-color="#ffffff"/><stop offset="1" stop-color="#c4d4f4"/></linearGradient></defs><path d="M15.5 1h3.5v5l-3.5-2z" fill="#c8281a"/><path d="M2.5 12l8 .5v11l-8-2.500z" fill="#a9c3ee" stroke="#7f9ad4" stroke-width=".6"/><path d="M10.5 12.5L17 4.5l7 8v9l-13.5 2z" fill="url(#hw)" stroke="#8aa2d8" stroke-width=".6"/><path d="M1.2 11.8L9.5 2.5l7.5 1-6.500 9.300z" fill="#f2a63e" stroke="#d68a24" stroke-width=".6"/><path d="M17 3.5l8 9.300-1.300 1L17 6l-6 7.500-1.200-.9z" fill="#8a6478"/><path d="M15.5 15h3.200v7.500l-3.200.5z" fill="#4a5a9a"/></svg>
<div class="a" style="left:230px;top:54px;width:1px;height:30px;background:#c9c5b2;box-shadow:1px 0 0 #fff"></div>
<svg class="a" style="left:235px;top:56px;" width="28" height="26" viewBox="0 0 28 26"><circle cx="16" cy="10" r="8" fill="#dceeff" stroke="#7a9cc8" stroke-width="2"/><circle cx="16" cy="10" r="5.6" fill="#f4faff" opacity=".8"/><path d="M10 16L3 23.5" stroke="#c98a3c" stroke-width="3.6" stroke-linecap="round"/><path d="M10.4 15.6L8.5 17.6" stroke="#8a8a8a" stroke-width="3"/></svg>
<div class="t" style="left:265px;top:63px;letter-spacing:-0.73px;">검색</div>
<svg class="a" style="left:299px;top:56px;" width="26" height="26" viewBox="0 0 26 26"><path d="M13 1.5l3.6 8 8.6.9-6.4 5.8 1.8 8.5L13 20.3 5.4 24.700l1.800-8.500L.8 10.400l8.600-.9z" fill="#fbd437" stroke="#d79a10" stroke-width="1.2" stroke-linejoin="round"/><path d="M13 4.500l2.600 6 6 .6-4.500 4" fill="none" stroke="#fff6b0" stroke-width="1.400" opacity=".9"/></svg>
<div class="t" style="left:328px;top:63px;letter-spacing:-0.47px;">즐겨찾기</div>
<svg class="a" style="left:387px;top:57px;" width="26" height="25" viewBox="0 0 26 25"><circle cx="14.5" cy="12.5" r="9.5" fill="#e8eef8" stroke="#9a9aa0" stroke-width="2.200"/><circle cx="14.5" cy="12.5" r="7" fill="#cfe3f6" stroke="#7aa4d0" stroke-width="1"/><path d="M14.5 12.5V7M14.5 12.5l4.500-2" stroke="#3a4a6a" stroke-width="1.500"/><path d="M12 4.500a9 9 0 0 0-6.500 10" fill="none" stroke="#2fa52f" stroke-width="4"/><path d="M1 13.500h9.500L5.700 20.500z" fill="#2fa52f"/></svg>
<div class="a" style="left:418px;top:54px;width:1px;height:30px;background:#c9c5b2;box-shadow:1px 0 0 #fff"></div>
<svg class="a" style="left:427px;top:57px;" width="24" height="24" viewBox="0 0 24 24"><path d="M1.500 9.500L11 2l9.500 7.500V22h-19z" fill="#dfeafb" stroke="#7f9fd4" stroke-width="1.200"/><path d="M4 11V5.500h13V11" fill="#fff" stroke="#a8b8d8" stroke-width=".8"/><path d="M5 6.500c3-2 8-2 11 0v4H5z" fill="#f7c98a"/><path d="M1.500 9.500L11 16.500l9.500-7V22h-19z" fill="#c5d9f6" stroke="#7f9fd4" stroke-width="1.200"/><path d="M1.500 22l7.500-7M20.500 22L13 15" stroke="#7f9fd4" stroke-width="1"/></svg>
<svg class="a" style="left:454px;top:68px;" width="5" height="3" viewBox="0 0 5 3"><path d="M0 0h5L2.5 3z" fill="#000"/></svg>
<svg class="a" style="left:465px;top:56px;" width="25" height="26" viewBox="0 0 25 26"><path d="M7 1.500h10l2 9H5z" fill="#f6fbff" stroke="#9ab" stroke-width="1"/><path d="M2 12.500l3-3h15l3 3v7H2z" fill="#dcdcd8" stroke="#8a8a88" stroke-width="1"/><path d="M2 12.500h21v7H2z" fill="#c4c4c0" stroke="#8a8a88" stroke-width="1"/><path d="M5 19.500h15l-1.500 5h-12z" fill="#fff" stroke="#9a9a98" stroke-width="1"/><circle cx="20" cy="15.500" r="1" fill="#4c4"/></svg>
<svg class="a" style="left:505px;top:59px;" width="18" height="19" viewBox="0 0 20 22"><path d="M2 1.500h11l5 5v14H2z" fill="#fbfbf8" stroke="#9a9a9a" stroke-width="1.200"/><path d="M4 6h9v11H4z" fill="#e3e3e3"/><path d="M5 9l2 6 2-5 2 5 2-6" fill="none" stroke="#8a8a9a" stroke-width="1.300"/></svg>
<svg class="a" style="left:534px;top:68px;" width="5" height="3" viewBox="0 0 5 3"><path d="M0 0h5L2.5 3z" fill="#000"/></svg>
<svg class="a" style="left:549px;top:57px;" width="23" height="24" viewBox="0 0 23 24"><path d="M1 1h21v16l-6 6H1z" fill="#fbdd5a" stroke="#d5a520" stroke-width="1.200"/><path d="M22 17h-6v6z" fill="#f7ecab" stroke="#d5a520" stroke-width="1"/><path d="M1.600 1.600h19.800" stroke="#fdf0a0" stroke-width="1.200"/></svg>
<svg class="a" style="left:579px;top:56px;" width="25" height="26" viewBox="0 0 25 26"><rect x="2" y="4" width="5" height="18" fill="#4d6fc2" stroke="#2d468a" stroke-width=".8"/><rect x="7" y="2" width="5" height="20" fill="#c7882e" stroke="#8a5a14" stroke-width=".8"/><rect x="12" y="5" width="5" height="17" fill="#5a8f4a" stroke="#32602a" stroke-width=".8"/><rect x="1" y="21" width="18" height="3" fill="#8a7a5a"/><circle cx="15" cy="12" r="5.500" fill="#e6f2ff" fill-opacity=".85" stroke="#7a7a8a" stroke-width="1.800"/><path d="M19 16l5 6" stroke="#c8862e" stroke-width="3" stroke-linecap="round"/></svg>
<svg class="a" style="left:611px;top:57px;" width="27" height="24" viewBox="0 0 27 24"><circle cx="17" cy="6.500" r="4.500" fill="#5fa5a0"/><path d="M8.500 22c0-8 3-11 8.500-11s8.500 3 8.500 11z" fill="#4f958f"/><circle cx="8" cy="9" r="3.800" fill="#7db5e0"/><path d="M1 21.500c0-6 2.500-8.500 7-8.500s7 2.500 7 8.500z" fill="#5f9fd6"/><circle cx="17" cy="6.500" r="4.500" fill="none" stroke="#3a7a75" stroke-width=".8"/></svg>
<div class="a" style="left:989px;top:50px;width:1px;height:37px;background:#c9c5b2;box-shadow:1px 0 0 #fff"></div>
<div class="t" style="left:996px;top:63px;color:#8a8778;letter-spacing:-0.73px;">연결</div>
<div class="a" style="left:0px;top:89px;width:1024px;height:27px;background:linear-gradient(rgba(255,255,255,.25) 0,rgba(255,255,255,0) 50%,rgba(120,110,70,.13) 100%),linear-gradient(90deg,#f4f3ee 0,#f0eee4 45%,#ece9da 100%)"></div>
<div class="a" style="left:0px;top:89px;width:1024px;height:1px;background:#fff"></div>
<div class="a" style="left:0px;top:114px;width:1024px;height:1px;background:#cfcbb8"></div>
<div class="a" style="left:0px;top:115px;width:1024px;height:1px;background:#a5a292"></div>
<div class="a" style="left:0px;top:116px;width:1022px;height:1px;background:#6f6c60"></div>
<div class="t" style="left:6px;top:95px;font-size:14px;color:#3cab1f;letter-spacing:1.01px;font-weight:bold;-webkit-text-stroke:1.500px #3cab1f;">NAVER</div>
<div class="a" style="left:65px;top:91px;width:294px;height:23px;border:2px solid #52a72a;background:#fff"></div>
<div class="a" style="left:67px;top:93px;width:20px;height:19px;background:#ececec;border-right:1px solid #e0e0e0"></div>
<svg class="a" style="left:69px;top:95px;" width="16" height="16" viewBox="0 0 16 16"><circle cx="9.500" cy="6" r="4" fill="#fff" stroke="#9a9a9a" stroke-width="1.800"/><path d="M6.500 9L2.500 13.500" stroke="#9a9a9a" stroke-width="2.200" stroke-linecap="round"/></svg>
<div class="t" style="left:93px;top:96px;color:#444;letter-spacing:0.48px;">http://www.itembay.com/</div>
<svg class="a" style="left:343px;top:99px;" width="9" height="6" viewBox="0 0 9 6"><path d="M0 0h9L4.500 6z" fill="#52a72a"/></svg>
<div class="t" style="left:367px;top:96px;letter-spacing:-0.73px;">이동</div>
<svg class="a" style="left:396px;top:101px;" width="5" height="3" viewBox="0 0 5 3"><path d="M0 0h5L2.5 3z" fill="#000"/></svg>
<div class="a" style="left:415px;top:93px;width:1px;height:19px;background:#b9b5a2"></div>
<svg class="a" style="left:410px;top:99px;" width="4" height="7" viewBox="0 0 4 7"><path d="M4 0v7L0 3.500z" fill="#a8a494"/></svg>
<svg class="a" style="left:418px;top:99px;" width="4" height="7" viewBox="0 0 4 7"><path d="M0 0v7l4-3.500z" fill="#a8a494"/></svg>
<svg class="a" style="left:428px;top:93px;" width="19" height="18" viewBox="0 0 19 18"><path d="M5 2h10a4 4 0 0 1 4 4v5a4 4 0 0 1-4 4H8l-5 3 1.500-3.500A4 4 0 0 1 1 11V6a4 4 0 0 1 4-4z" fill="#3e6fe0" stroke="#2850b8" stroke-width=".8"/><circle cx="6" cy="8.500" r="1.200" fill="#fff"/><circle cx="10" cy="8.500" r="1.200" fill="#fff"/><circle cx="14" cy="8.500" r="1.200" fill="#fff"/></svg>
<div class="t" style="left:450px;top:96px;letter-spacing:-0.56px;">게임톡</div>
<svg class="a" style="left:494px;top:93px;" width="19" height="19" viewBox="0 0 19 19"><circle cx="9.500" cy="9.500" r="8.500" fill="#f08a1a" stroke="#8a2a0a" stroke-width="1.400"/><circle cx="9.500" cy="9.500" r="6" fill="#fbd24a"/><path d="M5.500 5.500h8l-5 9h-1.500l3-6H5.500z" fill="#8a1a0a"/></svg>
<div class="t" style="left:514px;top:96px;letter-spacing:-0.22px;">세븐소울즈</div>
<svg class="a" style="left:585px;top:93px;" width="15" height="18" viewBox="0 0 15 18"><circle cx="7.500" cy="8" r="6.500" fill="#f47a1c"/><path d="M5 15l2.500 3 2.500-3z" fill="#f47a1c"/><path d="M10.500 5.500a3.600 3.600 0 1 0 1 3.500H8" fill="none" stroke="#fff" stroke-width="1.700"/></svg>
<div class="t" style="left:604px;top:96px;letter-spacing:0.11px;">한게임</div>
<svg class="a" style="left:645px;top:101px;" width="5" height="3" viewBox="0 0 5 3"><path d="M0 0h5L2.5 3z" fill="#000"/></svg>
<svg class="a" style="left:658px;top:94px;" width="19" height="15" viewBox="0 0 19 15"><rect x=".5" y="1.5" width="17" height="12.5" fill="#f8f8f4" stroke="#b4b4ac"/><path d="M1 2h16l-8 7.500z" fill="#3fb02a"/><path d="M1 13.500l6-5.500M17 13.500l-6-5.500" stroke="#d0d0dc" stroke-width="1"/></svg>
<div class="t" style="left:679px;top:96px;letter-spacing:-0.73px;">메일</div>
<svg class="a" style="left:706px;top:101px;" width="5" height="3" viewBox="0 0 5 3"><path d="M0 0h5L2.5 3z" fill="#000"/></svg>
<svg class="a" style="left:721px;top:93px;" width="15" height="18" viewBox="0 0 15 18"><path d="M1.500 1.500h11a1.500 1.500 0 0 1 1.500 1.500v13.500h-12.500z" fill="#8fb4ea" stroke="#4d78c0" stroke-width="1"/><path d="M1.500 14.500h12.500v2.500h-12.500z" fill="#e8eef8" stroke="#4d78c0" stroke-width=".8"/><path d="M6 1.500h4v8l-2-1.800-2 1.800z" fill="#e0402a"/></svg>
<div class="t" style="left:742px;top:96px;letter-spacing:-0.73px;">사전</div>
<svg class="a" style="left:770px;top:101px;" width="5" height="3" viewBox="0 0 5 3"><path d="M0 0h5L2.5 3z" fill="#000"/></svg>
<svg class="a" style="left:785px;top:93px;" width="17" height="18" viewBox="0 0 17 18"><rect x="1" y="2" width="15" height="15" fill="#f6f6f2" stroke="#9a9a92" stroke-width="1"/><rect x="1" y="2" width="15" height="3" fill="#c8c8c0"/><path d="M4 15.500a4.500 4.500 0 0 1 9 0z" fill="#4caa3a"/><circle cx="8.500" cy="10" r="2" fill="#4caa3a"/><path d="M11 7l3-1-1 3z" fill="#4caa3a"/></svg>
<div class="t" style="left:806px;top:96px;letter-spacing:-0.22px;">화면캡처</div>
<svg class="a" style="left:858px;top:101px;" width="5" height="3" viewBox="0 0 5 3"><path d="M0 0h5L2.5 3z" fill="#000"/></svg>
<div class="t" style="left:877px;top:91px;font-weight:bold;font-family:"Liberation Sans",sans-serif;">»</div>
<div class="a" style="left:889px;top:93px;width:1px;height:19px;background:#b9b5a2;box-shadow:1px 0 0 #fff"></div>
<svg class="a" style="left:895px;top:94px;" width="16" height="16" viewBox="0 0 16 16"><path d="M8 .8l1.300 2.200 2.400-.9.300 2.600 2.600.300-.9 2.400L15.900 8.700l-2.200 1.300.9 2.400-2.600.300-.3 2.600-2.400-.9L8 16.600l-1.300-2.200-2.400.9-.3-2.600-2.600-.3.900-2.400L.100 8.700l2.200-1.300-.9-2.400 2.600-.3.300-2.600 2.400.9z" fill="#9a9a9a" stroke="#707070" stroke-width=".6" transform="scale(.94) translate(.5 0)"/><circle cx="8" cy="8.200" r="2.600" fill="#f0efe6" stroke="#707070" stroke-width=".8"/></svg>
<div class="t" style="left:916px;top:96px;letter-spacing:-0.73px;">관리</div>
<svg class="a" style="left:943px;top:101px;" width="5" height="3" viewBox="0 0 5 3"><path d="M0 0h5L2.5 3z" fill="#000"/></svg>
<svg class="a" style="left:958px;top:94px;" width="15" height="15" viewBox="0 0 15 15"><circle cx="7.500" cy="7.500" r="7" fill="#4aa82a" stroke="#2f861a" stroke-width=".8"/><path d="M5.500 3.800l4 3.700-4 3.700" fill="none" stroke="#fff" stroke-width="2.200" stroke-linejoin="round" stroke-linecap="round"/></svg>
<div class="t" style="left:978px;top:96px;letter-spacing:-0.56px;">로그인</div>
<!-- p_chrome_bot -->
<div class="a" style="left:1022px;top:116px;width:2px;height:600px;background:#fbfaf5"></div>
<div class="a" style="left:1005px;top:117px;width:17px;height:580px;background:#fbfbf9;border-left:1px solid #ececec"></div>
<div class="a" style="left:1005px;top:117px;width:17px;height:17px;background:#fff;border:1px solid #d4d4d4"></div>
<svg class="a" style="left:1010px;top:124px;" width="7" height="4" viewBox="0 0 7 4"><path d="M0 4h7L3.500 0z" fill="#000"/></svg>
<div class="a" style="left:1005px;top:248px;width:17px;height:251px;background:#fff;border:1px solid #e4e4e4;border-right-color:#adadad;border-bottom-color:#adadad"></div>
<div class="a" style="left:1005px;top:680px;width:17px;height:17px;background:#fff;border:1px solid #d4d4d4"></div>
<svg class="a" style="left:1010px;top:686px;" width="7" height="4" viewBox="0 0 7 4"><path d="M0 0h7L3.500 4z" fill="#000"/></svg>
<div class="a" style="left:2px;top:697px;width:1020px;height:17px;background:#fbfbf9;border-top:1px solid #ececec"></div>
<div class="a" style="left:2px;top:697px;width:17px;height:17px;background:#fff;border:1px solid #d4d4d4"></div>
<svg class="a" style="left:8px;top:702px;" width="4" height="7" viewBox="0 0 4 7"><path d="M4 0v7L0 3.500z" fill="#000"/></svg>
<div class="a" style="left:19px;top:697px;width:887px;height:17px;background:#fff;border:1px solid #e4e4e4;border-right-color:#adadad;border-bottom-color:#adadad"></div>
<div class="a" style="left:988px;top:697px;width:17px;height:17px;background:#fff;border:1px solid #d4d4d4"></div>
<svg class="a" style="left:995px;top:702px;" width="4" height="7" viewBox="0 0 4 7"><path d="M0 0v7l4-3.500z" fill="#000"/></svg>
<div class="a" style="left:1005px;top:697px;width:17px;height:17px;background:#fdfdfb"></div>
<div class="a" style="left:0px;top:714px;width:1024px;height:25px;background:#ece9d8"></div>
<div class="a" style="left:0px;top:714px;width:1024px;height:1px;background:#c4c1b0"></div>
<div class="a" style="left:0px;top:715px;width:1024px;height:1px;background:#9c9986"></div>
<div class="a" style="left:0px;top:716px;width:1024px;height:1px;background:#faf9f2"></div>
<svg class="a" style="left:1px;top:718px;" width="19" height="19" viewBox="0 0 19 19"><path d="M4 1h9l4 4v12H4z" fill="#fdfcf6" stroke="#8a8a80" stroke-width="1"/><path d="M13 1v4h4" fill="#d8d6c8" stroke="#8a8a80" stroke-width=".8"/><circle cx="7" cy="10" r="4.300" fill="none" stroke="#2f7de0" stroke-width="2"/><path d="M2 10h9" stroke="#2f7de0" stroke-width="1.600"/><path d="M1 13c2-5 8-8 11-6" fill="none" stroke="#f0c020" stroke-width="1"/></svg>
<div class="t" style="left:22px;top:721px;letter-spacing:-0.17px;">이템베이를 찾아주셔서 감사합니다.</div>
<div class="t" style="left:259px;top:721px;letter-spacing:-0.35px;">◆ 아</div>
<div class="a" style="left:704px;top:717px;width:1px;height:20px;background:#b4b09c;box-shadow:1px 0 0 #fff"></div>
<div class="a" style="left:728px;top:717px;width:1px;height:20px;background:#b4b09c;box-shadow:1px 0 0 #fff"></div>
<div class="a" style="left:752px;top:717px;width:1px;height:20px;background:#b4b09c;box-shadow:1px 0 0 #fff"></div>
<div class="a" style="left:776px;top:717px;width:1px;height:20px;background:#b4b09c;box-shadow:1px 0 0 #fff"></div>
<div class="a" style="left:800px;top:717px;width:1px;height:20px;background:#b4b09c;box-shadow:1px 0 0 #fff"></div>
<div class="a" style="left:824px;top:717px;width:1px;height:20px;background:#b4b09c;box-shadow:1px 0 0 #fff"></div>
<svg class="a" style="left:830px;top:721px;" width="15" height="15" viewBox="0 0 15 15"><circle cx="7.500" cy="7.500" r="6.800" fill="#2a56c8" stroke="#1a3a90" stroke-width=".8"/><path d="M3 4c2-2 4-1 5 0s1 3-1 4-2 3-3 2-2-4-1-6z" fill="#4cb848"/><path d="M9.500 8.500c2-1 3 0 3.500 1s-1 3.500-2.500 3.500-2-3.500-1-4.500z" fill="#4cb848"/></svg>
<div class="t" style="left:849px;top:721px;letter-spacing:-0.56px;">인터넷</div>
<div class="a" style="left:0px;top:738px;width:1024px;height:30px;background:linear-gradient(#2a62d8 0,#3f88f4 2px,#2a6ae6 5px,#2560dc 10px,#2259d2 20px,#2156cc 26px,#1b44a8 30px)"></div>
<div class="a" style="left:0px;top:738px;width:93px;height:30px;border-radius:0 10px 10px 0/0 15px 15px 0;background:radial-gradient(ellipse at 50% 45%,#4fb04c 0,#3d9a3c 55%,#2f8030 100%);border-top:1px solid #6cc468;box-shadow:inset -2px -1px 3px rgba(0,40,0,.45),1px 0 2px rgba(0,0,60,.5)"></div>
<svg class="a" style="left:9px;top:742px;" width="23" height="21" viewBox="0 0 19 18"><path d="M3 3.500c2.200-1.600 4.400-1.600 6.600 0l-1.300 5.500c-2.200-1.600-4.400-1.600-6.600 0z" fill="#e8552a"/><path d="M10.600 4c2.200 1.600 4.400 1.600 6.600 0l-1.300 5.500c-2.200 1.600-4.400 1.600-6.600 0z" fill="#7cc43c"/><path d="M1.500 10c2.200-1.600 4.400-1.600 6.600 0l-1.300 5.500c-2.200-1.600-4.400-1.600-6.600 0z" fill="#4a8cf0"/><path d="M9.100 10.500c2.200 1.600 4.400 1.600 6.600 0l-1.300 5.500c-2.200 1.600-4.400 1.600-6.600 0z" fill="#f8c828"/></svg>
<div class="t" style="left:36px;top:745px;font-size:16px;color:#fff;font-weight:bold;letter-spacing:1.45px;text-shadow:1px 1px 1px #1a4a1a;">시작</div>
<svg class="a" style="left:104px;top:745px;" width="17" height="17" viewBox="0 0 17 17"><rect x="1.500" y="1.500" width="13" height="13" rx="2" fill="#e8f0fc" stroke="#5a7fc8" stroke-width="1.200"/><circle cx="8" cy="8" r="3.800" fill="none" stroke="#2f6fd0" stroke-width="1.600"/><path d="M9 7l6-5" stroke="#e0a020" stroke-width="2"/></svg>
<svg class="a" style="left:127px;top:744px;" width="18" height="18" viewBox="0 0 18 18"><circle cx="9" cy="10" r="6" fill="none" stroke="#4aa8f4" stroke-width="3"/><path d="M3 10h12" stroke="#4aa8f4" stroke-width="2.600"/><path d="M1.500 14.500C2 6 12 1 17 3.500" fill="none" stroke="#f8d040" stroke-width="1.400"/></svg>
<div class="a" style="left:151px;top:745px;width:16px;height:16px;background:#f6f6fa;border-radius:3px;border:1px solid #c8c8d8"></div>
<div class="t" style="left:153px;top:748px;font-size:11px;color:#2a2a5a;font-weight:bold;font-family:"Liberation Sans",sans-serif;letter-spacing:-.3px;"><span style="color:#c8202a">i</span>B</div>
<div class="a" style="left:178px;top:742px;width:153px;height:23px;border-radius:3px;background:linear-gradient(#5a9af8 0,#3f83f2 3px,#3a7eee 60%,#3474e4);box-shadow:inset 1px 1px 0 #78b0fc,0 0 0 1px #2456c0"></div>
<svg class="a" style="left:187px;top:744px;" width="19" height="19" viewBox="0 0 19 19"><path d="M4 1h9l4 4v12H4z" fill="#fdfcf6" stroke="#8a8a80" stroke-width="1"/><path d="M13 1v4h4" fill="#d8d6c8" stroke="#8a8a80" stroke-width=".8"/><circle cx="7" cy="10" r="4.300" fill="none" stroke="#2f7de0" stroke-width="2"/><path d="M2 10h9" stroke="#2f7de0" stroke-width="1.600"/><path d="M1 13c2-5 8-8 11-6" fill="none" stroke="#f0c020" stroke-width="1"/></svg>
<div class="t" style="left:207px;top:747px;color:#fff;letter-spacing:0.05px;">한게임 - 즐거운 ...</div>
<div class="a" style="left:334px;top:742px;width:154px;height:23px;border-radius:3px;background:linear-gradient(#1a49a8,#1f55c0 40%,#2058c4);box-shadow:inset 1px 1px 2px #0f2f78,0 0 0 1px #16409a"></div>
<svg class="a" style="left:343px;top:744px;" width="19" height="19" viewBox="0 0 19 19"><path d="M4 1h9l4 4v12H4z" fill="#fdfcf6" stroke="#8a8a80" stroke-width="1"/><path d="M13 1v4h4" fill="#d8d6c8" stroke="#8a8a80" stroke-width=".8"/><circle cx="7" cy="10" r="4.300" fill="none" stroke="#2f7de0" stroke-width="2"/><path d="M2 10h9" stroke="#2f7de0" stroke-width="1.600"/><path d="M1 13c2-5 8-8 11-6" fill="none" stroke="#f0c020" stroke-width="1"/></svg>
<div class="t" style="left:364px;top:747px;color:#fff;letter-spacing:0.28px;">http://www.item...</div>
<div class="a" style="left:492px;top:742px;width:151px;height:23px;border-radius:3px;background:linear-gradient(#5a9af8 0,#3f83f2 3px,#3a7eee 60%,#3474e4);box-shadow:inset 1px 1px 0 #78b0fc,0 0 0 1px #2456c0"></div>
<svg class="a" style="left:501px;top:745px;" width="16" height="17" viewBox="0 0 16 17"><rect x="2" y="1.500" width="11" height="9" rx="1" fill="#d8e8fc" stroke="#8aa8d8" stroke-width="1"/><rect x="3.500" y="3" width="8" height="6" fill="#3a8ae8"/><path d="M5 11h5l1 3H4z" fill="#c8d4e8"/><rect x="3" y="14" width="9" height="2" rx="1" fill="#e8eef8"/></svg>
<div class="t" style="left:520px;top:747px;color:#fff;letter-spacing:-0.50px;">내 컴퓨터</div>
<svg class="a" style="left:654px;top:744px;" width="17" height="18" viewBox="0 0 17 18"><circle cx="7.500" cy="8" r="6.500" fill="#6aa858" stroke="#3a6a38" stroke-width=".8"/><path d="M3 5c2-1 3 0 4 1s0 3-2 3-3-2-2-4z" fill="#c8b868"/><path d="M6 15l7-9 2.500 2-7 9-3 1z" fill="#f0d068" stroke="#8a6a20" stroke-width=".8"/><path d="M13 6l2.500 2" stroke="#d04040" stroke-width="2"/></svg>
<div class="a" style="left:672px;top:742px;width:20px;height:23px;background:#0e3a9c;border-radius:2px"></div>
<div class="t" style="left:674px;top:744px;font-size:21px;color:#fff;font-weight:bold;font-family:"Liberation Sans",sans-serif;">A</div>
<div class="a" style="left:692px;top:742px;width:20px;height:23px;background:#123fa4;border-radius:2px"></div>
<div class="t" style="left:693px;top:745px;font-size:18px;color:#fff;font-family:"Noto Sans CJK KR","Noto Sans CJK SC",sans-serif;font-weight:500;">漢</div>
<div class="a" style="left:718px;top:746px;width:12px;height:13px;background:#fbf8e0;border:1px solid #222;border-radius:1px"></div>
<div class="t" style="left:721px;top:747px;font-size:11px;color:#000;font-weight:bold;font-family:"Liberation Sans",sans-serif;">?</div>
<div class="a" style="left:742px;top:745px;width:6px;height:5px;border:1px solid #fff;border-top-width:2px"></div>
<div class="a" style="left:745px;top:743px;width:6px;height:5px;border:1px solid #fff;border-top-width:2px;border-left:0;border-bottom:0"></div>
<svg class="a" style="left:743px;top:756px;" width="5" height="3" viewBox="0 0 5 3"><path d="M0 0h5L2.500 3z" fill="#fff"/></svg>
<div class="a" style="left:921px;top:738px;width:103px;height:30px;background:linear-gradient(#1a78d8 0,#3aa4f4 2px,#1a8ae8 5px,#1484e4 12px,#1180e0 22px,#0e6cc4 30px);border-left:1px solid #0a4a9c;box-shadow:inset 1px 0 0 #4ab0f8"></div>
<svg class="a" style="left:931px;top:744px;" width="19" height="19" viewBox="0 0 19 19"><circle cx="8" cy="8" r="6.500" fill="#b8b8b8" stroke="#686868" stroke-width="1"/><circle cx="8" cy="8" r="3.500" fill="#707070"/><circle cx="7" cy="7" r="1.500" fill="#d8d8d8"/><path d="M12 15l5-4M13 17l4-3" stroke="#8ab8e8" stroke-width="1"/></svg>
<div class="t" style="left:955px;top:747px;color:#fff;letter-spacing:-0.45px;">오후 10:22</div>
</body>
</html>
